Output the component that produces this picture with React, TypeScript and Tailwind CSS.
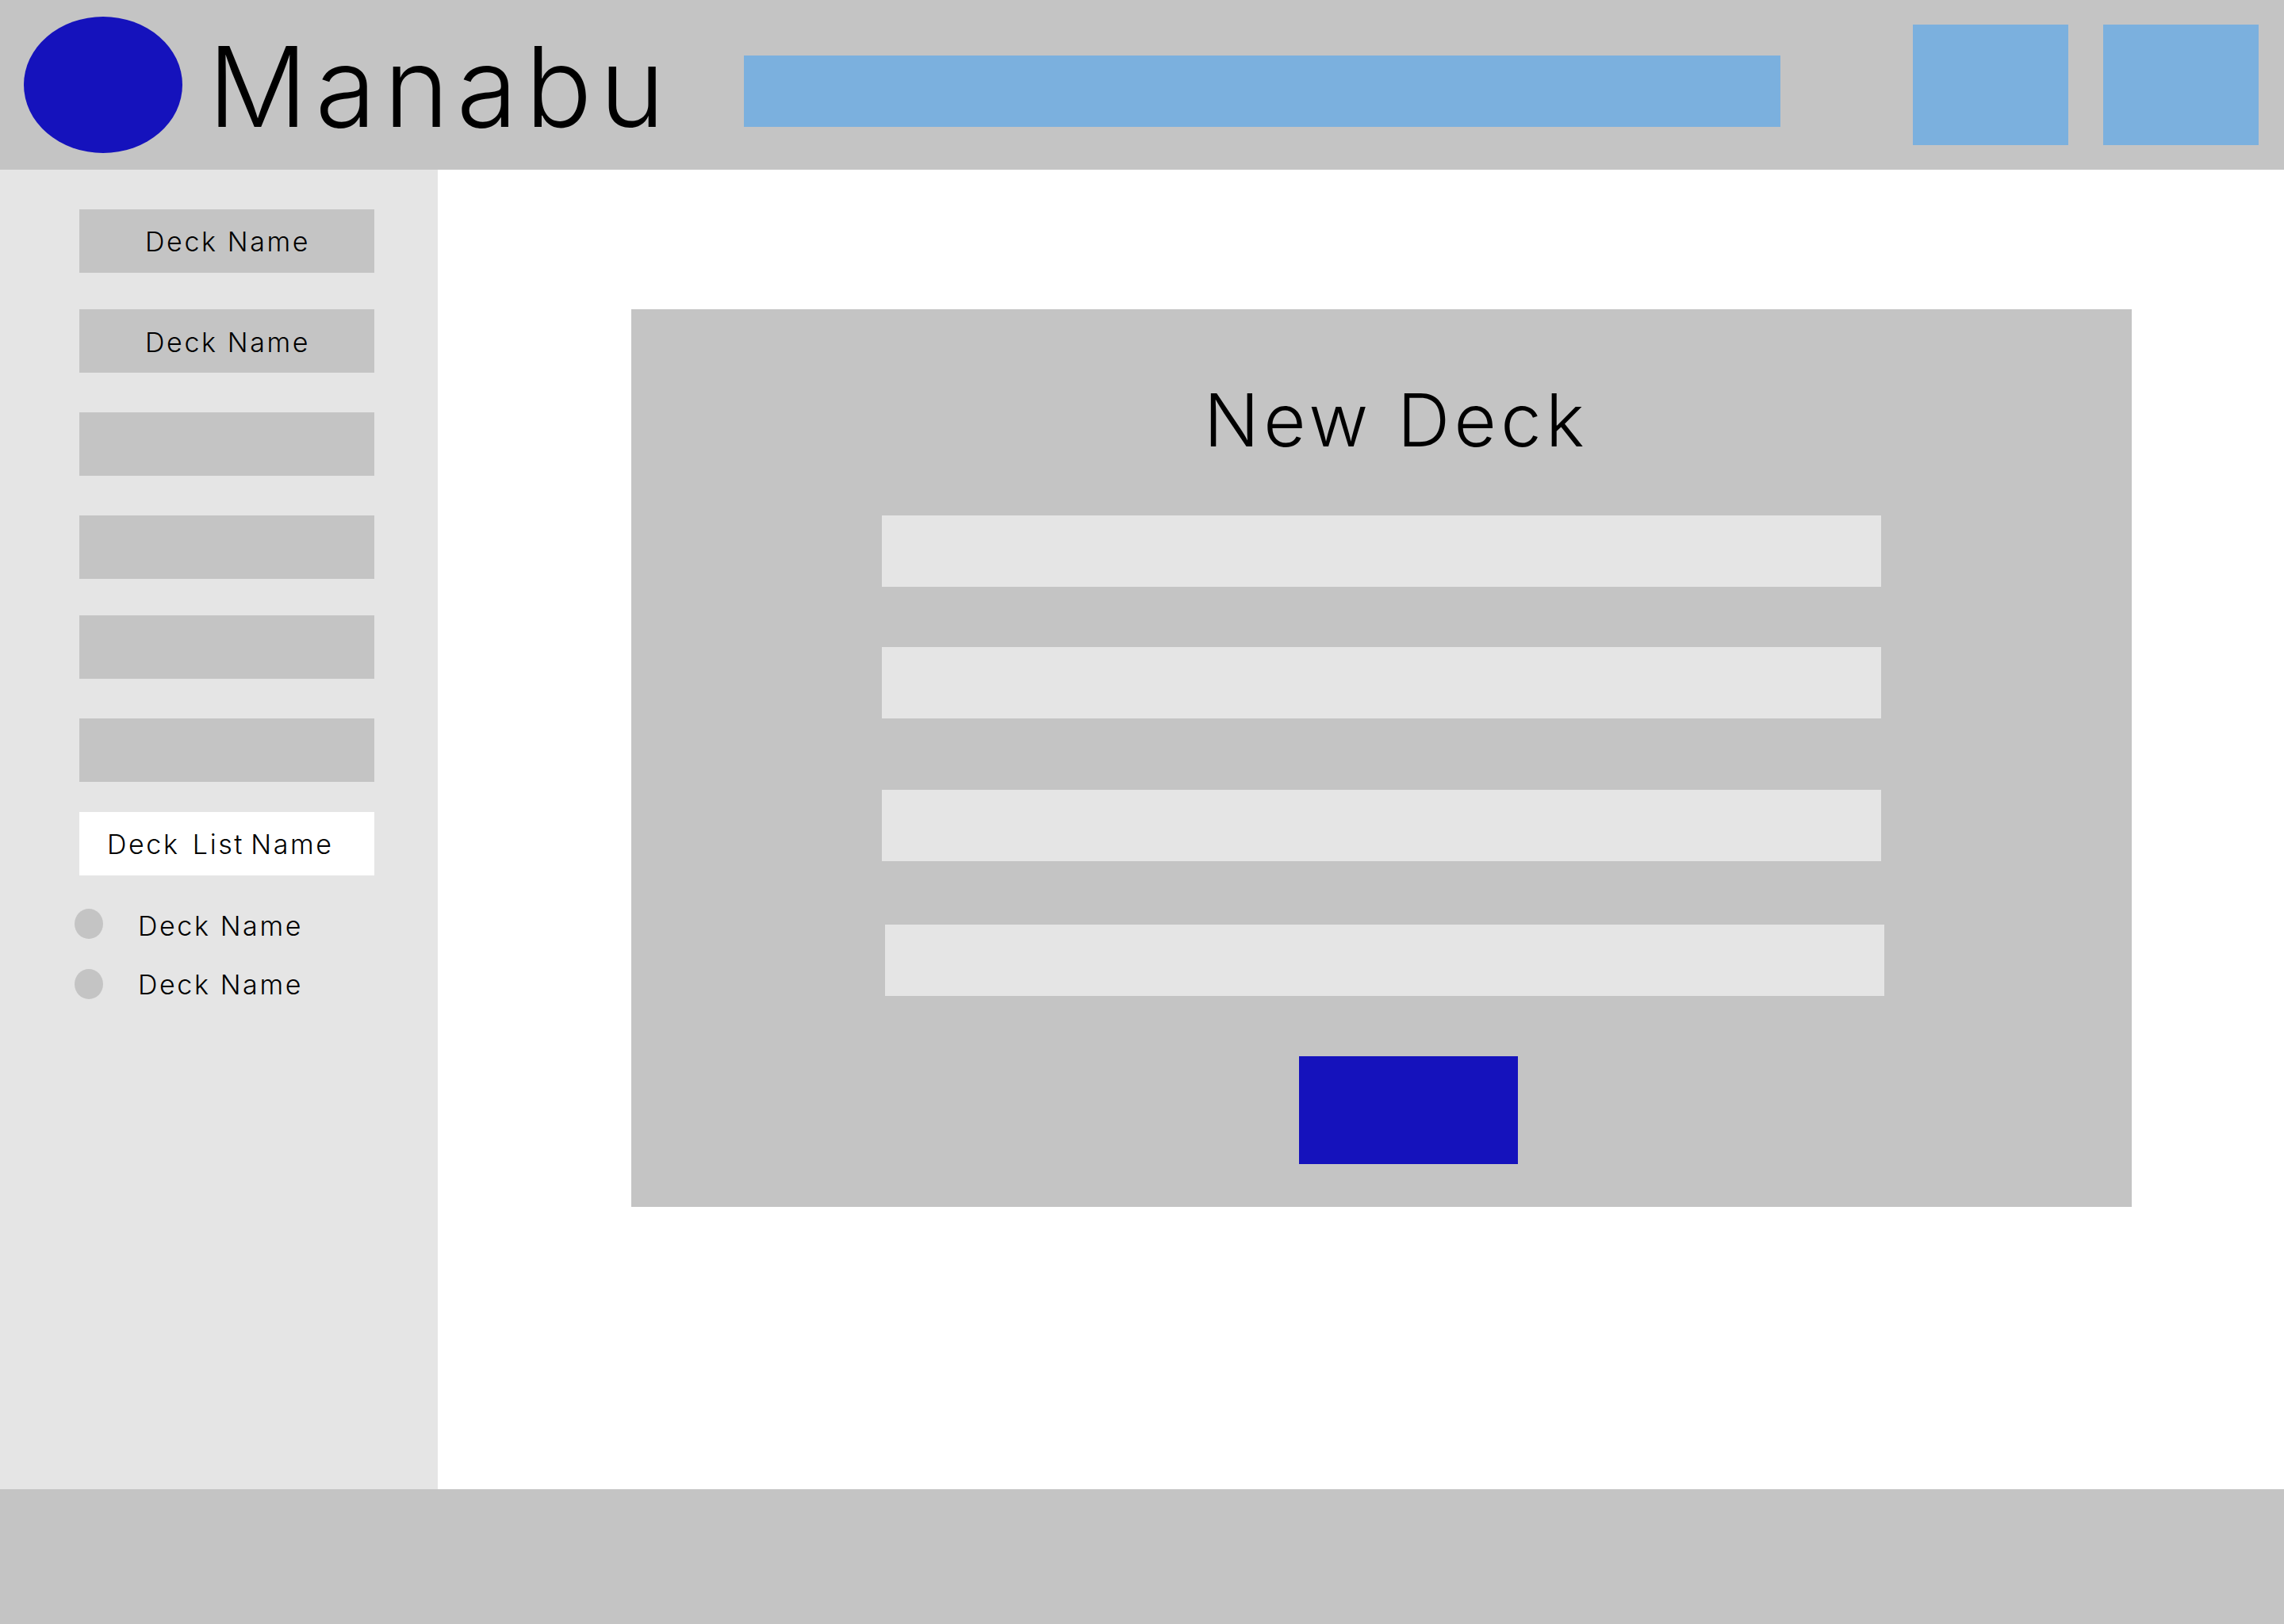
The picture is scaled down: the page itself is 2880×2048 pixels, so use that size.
import React from "react";

const font = "font-['Inter',sans-serif]";

const Deck: React.FC<{ label?: string; className: string }> = ({ label, className }) => (
  <div
    className={`w-[372px] h-[80px] bg-[#c4c4c4] flex items-center justify-center text-[34px] font-light tracking-[2.6px] text-black ${className}`}
  >
    {label}
  </div>
);

const DeckItem: React.FC<{ className: string; textClass?: string }> = ({ className, textClass = "" }) => (
  <div className={`flex items-center h-[38px] -ml-[6px] ${className}`}>
    <div className="w-[36px] h-[38px] rounded-[50%] bg-[#c4c4c4]" />
    <span className={`ml-[44px] text-[34px] font-light tracking-[2.6px] text-black ${textClass}`}>Deck Name</span>
  </div>
);

const Field: React.FC<{ className: string }> = ({ className }) => (
  <div className={`w-[1260px] h-[90px] bg-[#e5e5e5] ${className}`} />
);

export default function App() {
  return (
    <div className={`w-[2880px] h-[2048px] flex flex-col bg-white ${font}`}>
      <header className="h-[214px] flex items-center bg-[#c4c4c4] shrink-0">
        <div className="ml-[30px] w-[200px] h-[172px] rounded-[50%] bg-[#1512bc]" />
        <h1 className="ml-[32px] mt-[4px] w-[676px] text-[140px] leading-none font-light tracking-[9.5px] text-black">Manabu</h1>
        <div className="self-start mt-[70px] w-[1307px] h-[90px] bg-[#7bb0de]" />
        <button className="ml-[167px] w-[196px] h-[152px] bg-[#7bb0de]" />
        <button className="ml-[44px] w-[196px] h-[152px] bg-[#7bb0de]" />
      </header>

      <div className="flex flex-1">
        <aside className="w-[552px] bg-[#e5e5e5] pl-[100px] pt-[50px] shrink-0">
          <Deck label="Deck Name" className="pl-[2px]" />
          <Deck label="Deck Name" className="mt-[46px] pl-[2px] pt-[3px]" />
          <Deck className="mt-[50px]" />
          <Deck className="mt-[50px]" />
          <Deck className="mt-[46px]" />
          <Deck className="mt-[50px]" />
          <div className="mt-[38px] w-[372px] h-[80px] bg-white flex items-center pl-[35px] text-[34px] font-light tracking-[2.6px] [word-spacing:-4px] text-black whitespace-pre">
            Deck  List Name
          </div>
          <DeckItem className="mt-[42px]" textClass="pt-[4px]" />
          <DeckItem className="mt-[38px]" />
        </aside>

        <main className="flex-1 pl-[244px] pt-[176px]">
          <section className="w-[1892px] h-[1132px] bg-[#c4c4c4] pl-[316px]">
            <h2 className="w-[1260px] pt-[85px] h-[260px] pl-[37px] text-center text-[92px] leading-[1.2] font-light tracking-[5.4px] text-black">
              New Deck
            </h2>
            <Field className="" />
            <Field className="mt-[76px]" />
            <Field className="mt-[90px]" />
            <Field className="mt-[80px] ml-[4px]" />
            <button className="block mt-[76px] ml-[526px] w-[276px] h-[136px] bg-[#1512bc]" />
          </section>
        </main>
      </div>

      <footer className="h-[170px] bg-[#c4c4c4] shrink-0" />
    </div>
  );
}
